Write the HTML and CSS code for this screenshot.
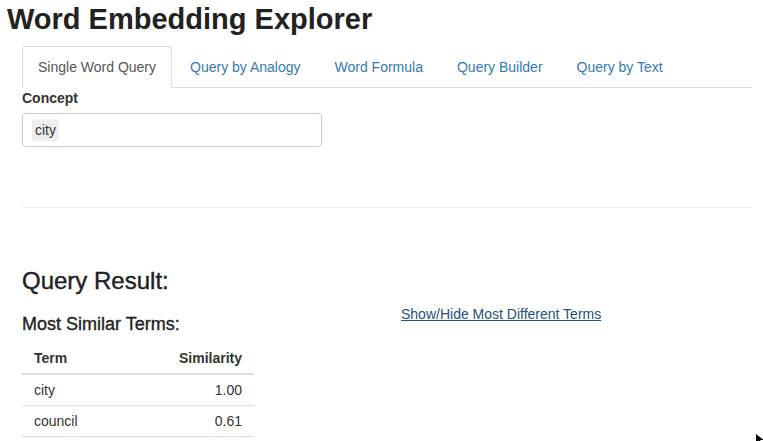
FILE: index.html
```html
<!DOCTYPE html>
<html>
<head>
<meta charset="utf-8">
<title>Word Embedding Explorer</title>
<link rel="stylesheet" href="styles.css">
</head>
<body>
<h1 class="title">Word Embedding Explorer</h1>
<div class="container">
  <ul class="tabs">
    <li class="tab active"><a>Single Word Query</a></li>
    <li class="tab"><a>Query by Analogy</a></li>
    <li class="tab"><a>Word Formula</a></li>
    <li class="tab"><a>Query Builder</a></li>
    <li class="tab"><a>Query by Text</a></li>
  </ul>
  <div class="tab-content">
    <label class="field-label">Concept</label>
    <div class="select-input"><span class="item">city</span></div>
  </div>
  <hr class="divider">
  <h3 class="result-title">Query Result:</h3>
  <div class="row">
    <div class="col col-left">
      <h4 class="sub-title">Most Similar Terms:</h4>
      <table class="result-table">
        <thead>
          <tr><th class="left">Term</th><th class="right">Similarity</th></tr>
        </thead>
        <tbody>
          <tr><td class="left">city</td><td class="right">1.00</td></tr>
          <tr><td class="left">council</td><td class="right">0.61</td></tr>
        </tbody>
      </table>
    </div>
    <div class="col col-right">
      <a class="toggle-link">Show/Hide Most Different Terms</a>
    </div>
  </div>
</div>
<svg class="cursor" width="10" height="10" viewBox="0 0 10 10"><path d="M0 0 L0 9 L2.5 6.5 L4.5 10 L6 9.2 L4 6 L7.5 6 Z" fill="#000"/></svg>
</body>
</html>
```

FILE: styles.css
```css
html, body {
  margin: 0;
  padding: 0;
  background: #fff;
}
body {
  font-family: "Liberation Sans", Arial, Helvetica, sans-serif;
  font-size: 14px;
  line-height: 20px;
  color: #333;
  position: relative;
  height: 441px;
  overflow: hidden;
}
.title {
  margin: 3px 0 0 7px;
  font-size: 29px;
  font-weight: bold;
  line-height: 32px;
  color: #222;
}
.container {
  margin-top: 11px;
  padding-left: 22px;
  width: 730px;
}
.tabs {
  list-style: none;
  margin: 0;
  padding: 0;
  display: flex;
  border-bottom: 1px solid #ddd;
}
.tab {
  margin-bottom: -1px;
}
.tab a {
  display: block;
  padding: 10px 15px;
  margin-right: 2px;
  line-height: 20px;
  border: 1px solid transparent;
  border-radius: 4px 4px 0 0;
  color: #337ab7;
}
.tab.active a {
  color: #555;
  background: #fff;
  border-color: #ddd #ddd transparent #ddd;
}
.tab-content {
  display: flex;
  flex-direction: column;
  align-items: flex-start;
}
.field-label {
  font-weight: bold;
  margin-bottom: 5px;
  line-height: 20px;
}
.select-input {
  box-sizing: border-box;
  width: 300px;
  height: 34px;
  border: 1px solid #ccc;
  border-radius: 4px;
  padding: 5px 9px;
  display: flex;
  align-items: flex-start;
}
.item {
  background: #efefef;
  border-radius: 3px;
  padding: 1px 3px;
  line-height: 20px;
  color: #333;
}
.divider {
  margin: 60px 0 0 0;
  border: 0;
  border-top: 1px solid #eee;
  height: 0;
}
.result-title {
  margin: 60px 0 0 0;
  font-size: 24px;
  font-weight: normal;
  line-height: 26px;
  color: #222;
  -webkit-text-stroke: 0.4px #222;
}
.row {
  display: flex;
  margin-top: 10px;
}
.col {
  flex: none;
}
.col-left {
  width: 379px;
}
.col-right {
  width: 351px;
}
.sub-title {
  margin: 10px 0 9px 0;
  font-size: 18px;
  font-weight: normal;
  line-height: 20px;
  color: #222;
  -webkit-text-stroke: 0.35px #222;
}
.result-table {
  width: 232px;
  border-collapse: collapse;
}
.result-table th {
  font-weight: bold;
  padding: 5px 12px;
  line-height: 20px;
  border-bottom: 2px solid #ddd;
}
.result-table td {
  padding: 5px 12px;
  line-height: 20px;
  border-bottom: 1px solid #ddd;
}
.left { text-align: left; }
.right { text-align: right; }
.toggle-link {
  display: inline-block;
  color: #23527c;
  text-decoration: underline;
  line-height: 20px;
}
.cursor {
  position: absolute;
  left: 756px;
  top: 434px;
}
```
